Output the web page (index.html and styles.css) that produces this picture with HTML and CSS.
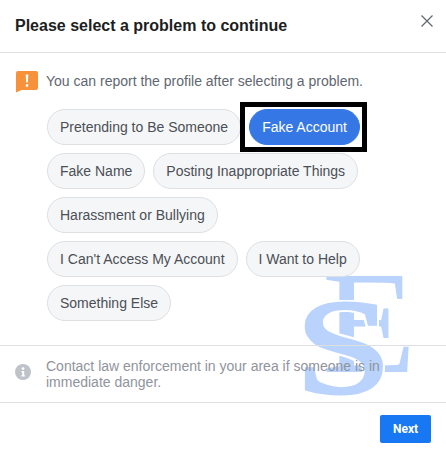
FILE: index.html
```html
<!DOCTYPE html>
<html lang="en">
<head>
<meta charset="utf-8">
<title>Report</title>
<link rel="stylesheet" href="styles.css">
</head>
<body>
<div class="dialog">
  <div class="watermark" aria-hidden="true"><span class="wm-e">E</span><span class="wm-s">S</span></div>
  <header class="head">
    <h1 class="title">Please select a problem to continue</h1>
    <svg class="close" viewBox="0 0 12 12" width="12" height="12"><path d="M.5.5l11 11M11.5.5l-11 11" stroke="#606770" stroke-width="1.2" fill="none"/></svg>
  </header>
  <section class="body">
    <div class="notice">
      <svg class="alert" viewBox="0 0 22 23" width="22" height="23"><path d="M2 0h18a2 2 0 0 1 2 2v15a2 2 0 0 1-2 2H5.500L0 21.500V2a2 2 0 0 1 2-2z" fill="#f7923b"/><path d="M9.700 3.500h2.600l-.4 8h-1.800zM9.800 13.300h2.400v2.400H9.800z" fill="#fff"/></svg>
      <p class="notice-text">You can report the profile after selecting a problem.</p>
    </div>
    <div class="pills">
      <div class="row">
        <button class="pill">Pretending to Be Someone</button>
        <button class="pill selected">Fake Account<span class="highlight"></span></button>
      </div>
      <div class="row">
        <button class="pill">Fake Name</button>
        <button class="pill">Posting Inappropriate Things</button>
      </div>
      <div class="row">
        <button class="pill">Harassment or Bullying</button>
      </div>
      <div class="row">
        <button class="pill">I Can't Access My Account</button>
        <button class="pill">I Want to Help</button>
      </div>
      <div class="row">
        <button class="pill">Something Else</button>
      </div>
    </div>
  </section>
  <section class="info">
    <svg class="info-icon" viewBox="0 0 16 16" width="16" height="16"><circle cx="8" cy="8" r="8" fill="#bec2c9"/><circle cx="8" cy="4.600" r="1.400" fill="#fff"/><path d="M6.300 7h2.900v4.300h.7v1.200H6.300v-1.200h.9V8.200h-.9z" fill="#fff"/></svg>
    <p class="info-text">Contact law enforcement in your area if someone is in immediate danger.</p>
  </section>
  <footer class="foot"><button class="next">Next</button></footer>
</div>
</body>
</html>
```
FILE: styles.css
```css
* { box-sizing: border-box; }
html, body { margin: 0; padding: 0; background: #fff; }
body { width: 446px; height: 452px; overflow: hidden; font-family: "Liberation Sans", Arial, sans-serif; }
.dialog { position: relative; width: 446px; height: 452px; display: flex; flex-direction: column; }
.head, .body, .info, .foot { position: relative; z-index: 1; }
.head { height: 53px; border-bottom: 1px solid #dddfe2; padding: 0 13px 0 15px; display: flex; align-items: center; justify-content: space-between; }
.title { margin: 0; font-size: 16px; font-weight: bold; color: #1c1e21; line-height: 20px; }
.close { align-self: flex-start; margin-top: 15px; }
.body { height: 292px; padding: 18px 15px 0 16px; }
.notice { display: flex; gap: 8px; align-items: flex-start; }
.alert { flex: none; }
.notice-text { margin: 1px 0 0; font-size: 14px; line-height: 18px; color: #606770; }
.pills { display: flex; flex-direction: column; gap: 8px; margin: 15px 0 0 31px; }
.row { display: flex; gap: 8px; }
.pill { position: relative; height: 36px; padding: 0 12px; border: 1px solid #dddfe2; border-radius: 18px; background: #f5f6f7; color: #4b4f56; font: 14px/18px "Liberation Sans", Arial, sans-serif; white-space: nowrap; }
.selected { background: #3578e5; border-color: #3578e5; color: #fff; }
.highlight { position: absolute; left: -10px; top: -8px; width: 127px; height: 50px; border: 5px solid #000; }
.info { height: 58px; border-top: 1px solid #dddfe2; border-bottom: 1px solid #dddfe2; padding: 12px 15px 0; display: flex; gap: 15px; align-items: flex-start; }
.info-icon { flex: none; margin-top: 6px; }
.info-text { margin: 0; font-size: 14px; line-height: 16px; color: #90949c; }
.foot { padding: 12px 15px 0; display: flex; justify-content: flex-end; }
.next { width: 51px; height: 28px; padding: 0; border: 0; border-radius: 2px; background: #1877f2; color: #fff; font: bold 12px Roboto, "Liberation Sans", sans-serif; }
.watermark { position: absolute; left: 290px; top: 260px; width: 150px; height: 145px; overflow: hidden; z-index: 0; font-family: "Liberation Serif", serif; color: #b9d3fd; }
.wm-e { position: absolute; left: 32px; top: -11px; font-size: 147px; line-height: 147px; transform: scaleX(1.05); transform-origin: 0 0; }
.wm-s { position: absolute; left: 5px; top: 18px; font-size: 136px; line-height: 139px; -webkit-text-stroke: 3px #b9d3fd; text-shadow: 3px 0 #fff, -3px 0 #fff, 0 3px #fff, 0 -3px #fff, 3px 3px #fff, -3px 3px #fff, 3px -3px #fff, -3px -3px #fff; transform: scaleX(1.28); transform-origin: 0 0; }
```
